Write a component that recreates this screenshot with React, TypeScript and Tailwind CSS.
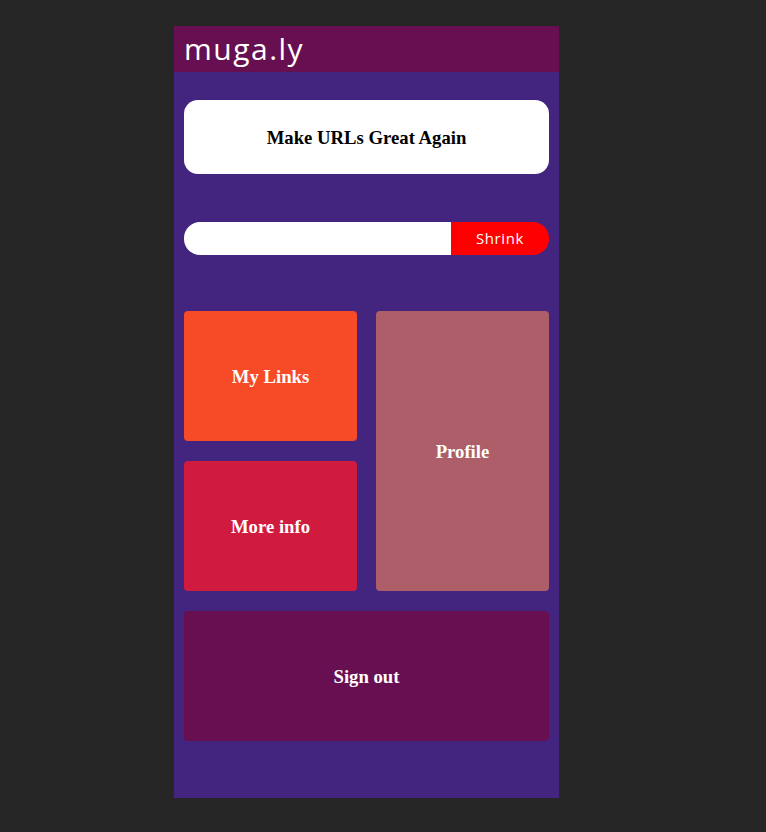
export default function App() {
  return (
    <div className="min-h-screen bg-[#262626] pt-[26px] pb-[34px]">
      <div className="ml-[174px] w-[385px] bg-[#432580] pb-[57px]">
        <header className="h-[46px] bg-[#680f52] px-[10px] flex items-center">
          <span className="text-white text-[30px] leading-none font-['Open_Sans',sans-serif] tracking-[1.5px]">muga.ly</span>
        </header>

        <div className="px-[10px]">
          <div className="mt-[28px] h-[74px] pt-[2px] rounded-[14px] bg-white flex items-center justify-center">
            <h1 className="font-['Liberation_Serif',serif] font-bold text-[18.72px] text-black">Make URLs Great Again</h1>
          </div>

          <div className="mt-[48px] h-[33px] flex rounded-[16px] overflow-hidden">
            <input className="flex-1 bg-white outline-none px-3" type="text" />
            <button className="w-[98px] bg-[#ff0000] text-white text-[15px] tracking-[0.6px] font-['Open_Sans',sans-serif]">Shrink</button>
          </div>

          <div className="mt-[56px] grid grid-cols-2 gap-x-[19px] gap-y-[20px] font-['Liberation_Serif',serif] font-bold text-[18.72px] text-white">
            <div className="h-[130px] pt-[2px] rounded-[4px] bg-[#f74a26] flex items-center justify-center">My Links</div>
            <div className="row-span-2 pt-[2px] rounded-[4px] bg-[#ad5e68] flex items-center justify-center">Profile</div>
            <div className="h-[130px] pt-[2px] rounded-[4px] bg-[#d01a3e] flex items-center justify-center">More info</div>
            <div className="col-span-2 h-[130px] pt-[2px] rounded-[4px] bg-[#680f52] flex items-center justify-center">Sign out</div>
          </div>
        </div>
      </div>
    </div>
  );
}
